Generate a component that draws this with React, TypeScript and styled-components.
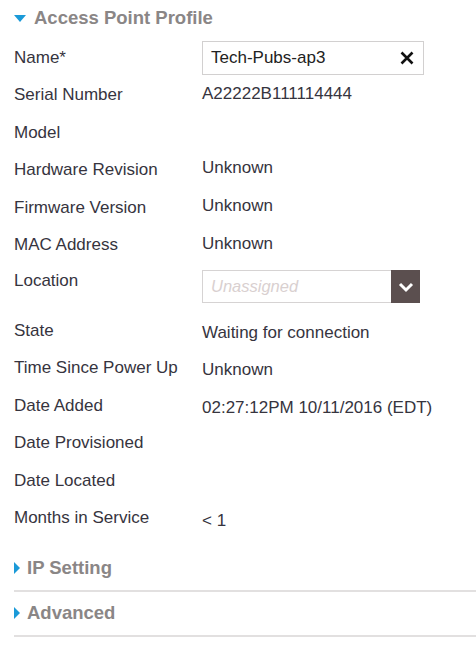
import React from "react";
import styled, { createGlobalStyle } from "styled-components";

const GlobalStyle = createGlobalStyle`
  body {
    margin: 0;
    background: #ffffff;
    font-family: "Liberation Sans", Arial, sans-serif;
  }
`;

const Page = styled.div`
  width: 476px;
  padding-left: 14px;
  box-sizing: border-box;
`;

const Header = styled.div`
  height: 39px;
  box-sizing: border-box;
  padding-bottom: 3px;
  display: flex;
  align-items: center;
  gap: 8px;
  font-size: 18.5px;
  font-weight: bold;
  color: #8a8686;
`;

const Triangle = styled.span<{ open?: boolean }>`
  display: inline-block;
  width: 0;
  height: 0;
  ${(p) =>
    p.open
      ? `
    border-left: 6px solid transparent;
    border-right: 6px solid transparent;
    border-top: 7px solid #1b9ad8;
  `
      : `
    border-top: 6.5px solid transparent;
    border-bottom: 6.5px solid transparent;
    border-left: 6px solid #1b9ad8;
  `}
`;

const Row = styled.div<{ tall?: boolean }>`
  display: grid;
  grid-template-columns: 188px 1fr;
  height: ${(p) => (p.tall ? "48px" : "37.5px")};
  align-items: ${(p) => (p.tall ? "start" : "center")};
  font-size: 17px;
`;

const Label = styled.div<{ tall?: boolean }>`
  color: #36343e;
  line-height: 20px;
  margin-top: ${(p) => (p.tall ? "7px" : "0")};
`;

const Value = styled.div<{ shift?: number }>`
  color: #36343e;
  line-height: 20px;
  position: relative;
  top: ${(p) => p.shift || 0}px;
`;

const TextBox = styled.div`
  width: 222px;
  height: 34px;
  box-sizing: border-box;
  border: 1px solid #d2d0d0;
  display: flex;
  align-items: center;
  justify-content: space-between;
  padding: 0 8px 0 8px;
  font-size: 17px;
  color: #222;
`;

const Select = styled.div`
  margin-top: 6px;
  width: 218px;
  height: 33px;
  box-sizing: border-box;
  border: 1px solid #d6d3d3;
  display: flex;
  align-items: stretch;
`;

const Placeholder = styled.span`
  flex: 1;
  display: flex;
  align-items: center;
  padding-left: 8px;
  font-style: italic;
  color: #d9d0d0;
  font-size: 16.5px;
`;

const DropButton = styled.span`
  width: 29px;
  margin: -1px -1px -1px 0;
  background: #5b4f4f;
  display: flex;
  align-items: center;
  justify-content: center;
`;

const Section = styled.div`
  height: 42px;
  border-bottom: 2px solid #e2e0e0;
  display: flex;
  align-items: center;
  gap: 7px;
  font-size: 18.5px;
  font-weight: bold;
  color: #8a8686;
  padding-bottom: 1px;
  box-sizing: content-box;
`;

const Sections = styled.div`
  margin-top: 10px;
`;

const rows: [string, string, number?][] = [
  ["Serial Number", "A22222B111114444", -1],
  ["Model", ""],
  ["Hardware Revision", "Unknown", -2],
  ["Firmware Version", "Unknown", -2],
  ["MAC Address", "Unknown", -1],
];

const rowsAfter: [string, string, number?][] = [
  ["State", "Waiting for connection", 2],
  ["Time Since Power Up", "Unknown", 2],
  ["Date Added", "02:27:12PM 10/11/2016 (EDT)", 2],
  ["Date Provisioned", ""],
  ["Date Located", ""],
  ["Months in Service", "< 1", 3],
];

const App = () => {
  return (
    <Page>
      <GlobalStyle />
      <Header>
        <Triangle open />
        Access Point Profile
      </Header>
      <Row>
        <Label>Name*</Label>
        <TextBox>
          Tech-Pubs-ap3
          <svg width="16" height="16" viewBox="0 0 16 16">
            <path d="M2.5 2.5 L13.5 13.5 M13.5 2.5 L2.5 13.5" stroke="#111" strokeWidth="2.6" />
          </svg>
        </TextBox>
      </Row>
      {rows.map(([l, v, s]) => (
        <Row key={l}>
          <Label>{l}</Label>
          <Value shift={s}>{v}</Value>
        </Row>
      ))}
      <Row tall>
        <Label tall>Location</Label>
        <Select>
          <Placeholder>Unassigned</Placeholder>
          <DropButton>
            <svg width="16" height="12" viewBox="0 0 16 12">
              <path d="M2 3 L8 9 L14 3" fill="none" stroke="#fff" strokeWidth="3" />
            </svg>
          </DropButton>
        </Select>
      </Row>
      {rowsAfter.map(([l, v, s]) => (
        <Row key={l}>
          <Label>{l}</Label>
          <Value shift={s}>{v}</Value>
        </Row>
      ))}
      <Sections>
        <Section>
          <Triangle />
          IP Setting
        </Section>
        <Section>
          <Triangle />
          Advanced
        </Section>
      </Sections>
    </Page>
  );
};

export default App;
